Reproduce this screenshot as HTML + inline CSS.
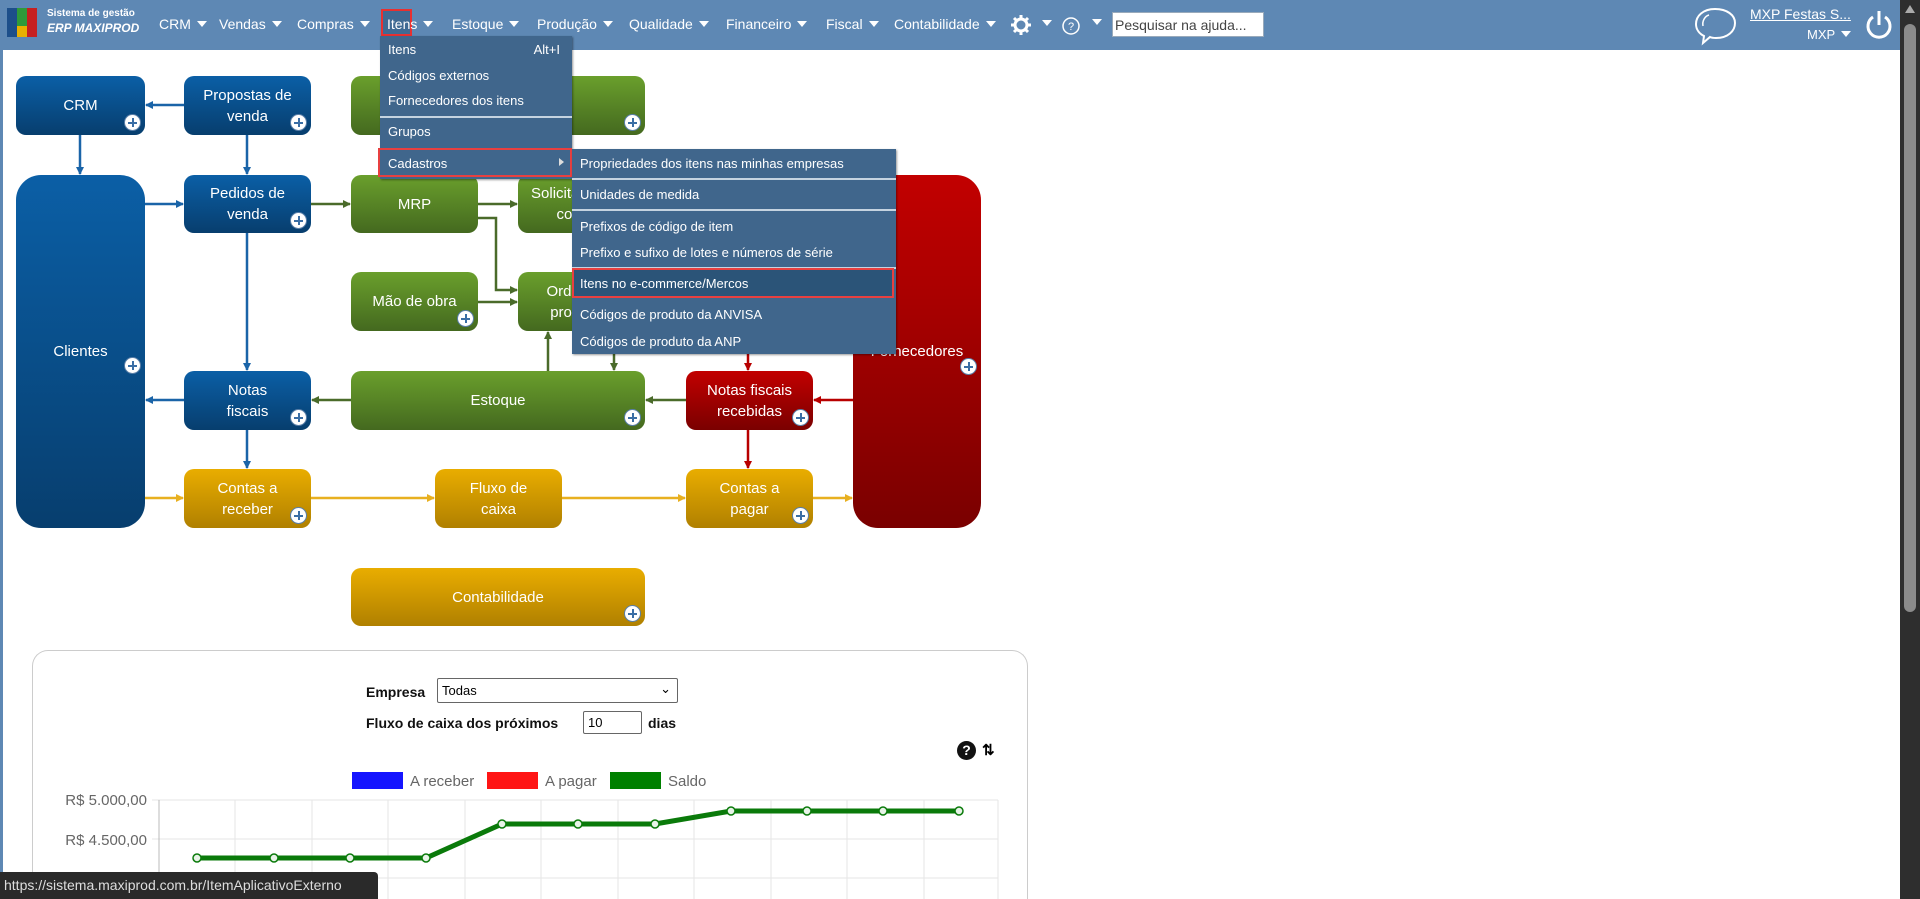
<!DOCTYPE html>
<html><head><meta charset="utf-8"><style>
*{box-sizing:border-box;margin:0;padding:0}
html{width:1920px;height:899px;overflow:hidden}
body{width:1920px;height:899px;overflow:hidden;background:#fff;font-family:"Liberation Sans",sans-serif;position:relative}
.nav{position:absolute;left:0;top:0;width:1900px;height:50px;background:#5e88b4}
.lstripe{position:absolute;left:0;top:50px;width:3px;height:849px;background:#5e88b4}
.sb{position:absolute;left:1900px;top:0;width:20px;height:899px;background:#2e2e2e}
.sb .th{position:absolute;left:4px;top:24px;width:12px;height:588px;background:#8b8b8b;border-radius:6px}
.ni{position:absolute;top:16px;color:#fff;font-size:14px}
.tri{display:inline-block;width:0;height:0;border-left:5px solid transparent;border-right:5px solid transparent;border-top:6px solid #fff;margin-left:6px;vertical-align:2px}
.menu{position:absolute;background:#40668c;color:#fff;font-size:13px;box-shadow:1px 1px 2px rgba(0,0,0,.4)}
.mi{position:absolute;left:8px}
.sep{position:absolute;left:0;right:0;height:2px;background:#c5d3e0}
.box{position:absolute;color:#fff;font-size:15px;text-align:center;display:flex;align-items:center;justify-content:center;line-height:21px;border-radius:10px}
.b{background:linear-gradient(#0b5fa6,#073e6e)}
.g{background:linear-gradient(#6a9f2c,#44691f)}
.r{background:linear-gradient(#c20000,#7a0000)}
.y{background:linear-gradient(#e9ad00,#b08000)}
.pl{position:absolute;right:4px;bottom:4px;width:17px;height:17px;border-radius:50%;background:#fff;border:1px solid #5a7fa8}
.pl:before{content:"";position:absolute;left:3px;top:6.5px;width:9px;height:2px;background:#3a6ea5}
.pl:after{content:"";position:absolute;left:6.5px;top:3px;width:2px;height:9px;background:#3a6ea5}
.lbl{position:absolute;font-size:14px;font-weight:bold;color:#111}
</style></head><body>
<div class="nav">
  <div style="position:absolute;left:7px;top:8px;width:10px;height:29px;background:#1d4f8a"></div>
  <div style="position:absolute;left:17px;top:8px;width:10px;height:18px;background:#2f9a3a"></div>
  <div style="position:absolute;left:17px;top:26px;width:10px;height:11px;background:#e8b000"></div>
  <div style="position:absolute;left:27px;top:8px;width:10px;height:29px;background:#c62020"></div>
  <div style="position:absolute;left:47px;top:8px;color:#fff;font-size:10px;font-weight:bold">Sistema de gestão</div>
  <div style="position:absolute;left:47px;top:21px;color:#fff;font-size:12px;font-weight:bold;font-style:italic">ERP MAXIPROD</div>
  <div class="ni" style="left:159px">CRM<span class="tri"></span></div>
  <div class="ni" style="left:219px">Vendas<span class="tri"></span></div>
  <div class="ni" style="left:297px">Compras<span class="tri"></span></div>
  <div style="position:absolute;left:381px;top:9px;width:31px;height:27px;border:2px solid #e83030;background:#3f6a93"></div>
  <div class="ni" style="left:387px">Itens<span class="tri"></span></div>
  <div class="ni" style="left:452px">Estoque<span class="tri"></span></div>
  <div class="ni" style="left:537px">Produção<span class="tri"></span></div>
  <div class="ni" style="left:629px">Qualidade<span class="tri"></span></div>
  <div class="ni" style="left:726px">Financeiro<span class="tri"></span></div>
  <div class="ni" style="left:826px">Fiscal<span class="tri"></span></div>
  <div class="ni" style="left:894px">Contabilidade<span class="tri"></span></div>
  <svg style="position:absolute;left:1010px;top:14px" width="22" height="22" viewBox="0 0 22 22"><circle cx="11" cy="11" r="6" fill="none" stroke="#fff" stroke-width="3"/><g stroke="#fff" stroke-width="3"><line x1="11" y1="1" x2="11" y2="5"/><line x1="11" y1="17" x2="11" y2="21"/><line x1="1" y1="11" x2="5" y2="11"/><line x1="17" y1="11" x2="21" y2="11"/><line x1="4" y1="4" x2="7" y2="7"/><line x1="15" y1="15" x2="18" y2="18"/><line x1="4" y1="18" x2="7" y2="15"/><line x1="15" y1="7" x2="18" y2="4"/></g></svg>
  <span class="tri" style="position:absolute;left:1036px;top:20px"></span>
  <svg style="position:absolute;left:1061px;top:16px" width="20" height="20"><circle cx="10" cy="10" r="8" fill="none" stroke="#fff" stroke-width="1.5"/><text x="10" y="14" font-size="11" fill="#fff" text-anchor="middle" font-family="Liberation Sans">?</text></svg>
  <span class="tri" style="position:absolute;left:1086px;top:19px"></span>
  <div style="position:absolute;left:1112px;top:12px;width:152px;height:25px;background:#fff;border:1px solid #9ab;font-size:14px;color:#444;padding:4px 2px">Pesquisar na ajuda...</div>
  <svg style="position:absolute;left:1693px;top:6px" width="46" height="40"><path d="M22 3 C10 3 3 10 3 18 C3 24 7 28 11 30 L10 37 L17 31 C19 32 21 32 23 32 C35 32 42 25 42 17 C42 9 34 3 22 3 Z" fill="none" stroke="#fff" stroke-width="2"/><path d="M10 20 C9 15 12 10 16 9" fill="none" stroke="#fff" stroke-width="1.5"/></svg>
  <div style="position:absolute;left:1750px;top:6px;color:#fff;font-size:14px;text-decoration:underline">MXP Festas S...</div>
  <div style="position:absolute;left:1807px;top:27px;color:#fff;font-size:13px">MXP<span class="tri"></span></div>
  <svg style="position:absolute;left:1864px;top:8px" width="30" height="34"><path d="M9 9 A11 11 0 1 0 21 9" fill="none" stroke="#fff" stroke-width="3"/><line x1="15" y1="3" x2="15" y2="17" stroke="#fff" stroke-width="3"/></svg>
</div>
<div class="lstripe"></div>
<div class="sb"><div class="th"></div><div style="position:absolute;left:5px;top:5px;border-left:5px solid transparent;border-right:5px solid transparent;border-bottom:8px solid #aaa"></div></div>

<svg style="position:absolute;left:0;top:0" width="1000" height="640">
<defs>
<marker id="ab" markerWidth="8" markerHeight="8" refX="7" refY="4" orient="auto" markerUnits="userSpaceOnUse"><path d="M0,0 L8,4 L0,8 z" fill="#1a64a8"/></marker>
<marker id="ag" markerWidth="8" markerHeight="8" refX="7" refY="4" orient="auto" markerUnits="userSpaceOnUse"><path d="M0,0 L8,4 L0,8 z" fill="#4a6b2a"/></marker>
<marker id="ar" markerWidth="8" markerHeight="8" refX="7" refY="4" orient="auto" markerUnits="userSpaceOnUse"><path d="M0,0 L8,4 L0,8 z" fill="#b80000"/></marker>
<marker id="ay" markerWidth="8" markerHeight="8" refX="7" refY="4" orient="auto" markerUnits="userSpaceOnUse"><path d="M0,0 L8,4 L0,8 z" fill="#e8b020"/></marker>
</defs>
<g stroke-width="2.5" fill="none">
<path d="M184 105 H146" stroke="#1a64a8" marker-end="url(#ab)"/>
<path d="M80 135 V174" stroke="#1a64a8" marker-end="url(#ab)"/>
<path d="M247 135 V174" stroke="#1a64a8" marker-end="url(#ab)"/>
<path d="M145 204 H183" stroke="#1a64a8" marker-end="url(#ab)"/>
<path d="M247 233 V370" stroke="#1a64a8" marker-end="url(#ab)"/>
<path d="M184 400 H146" stroke="#1a64a8" marker-end="url(#ab)"/>
<path d="M247 430 V468" stroke="#1a64a8" marker-end="url(#ab)"/>
<path d="M311 204 H350" stroke="#4a6b2a" marker-end="url(#ag)"/>
<path d="M478 204 H517" stroke="#4a6b2a" marker-end="url(#ag)"/>
<path d="M478 218 H496 V290 H517" stroke="#4a6b2a" marker-end="url(#ag)"/>
<path d="M478 302 H517" stroke="#4a6b2a" marker-end="url(#ag)"/>
<path d="M548 371 V332" stroke="#4a6b2a" marker-end="url(#ag)"/>
<path d="M614 331 V370" stroke="#4a6b2a" marker-end="url(#ag)"/>
<path d="M351 400 H312" stroke="#4a6b2a" marker-end="url(#ag)"/>
<path d="M686 400 H646" stroke="#4a6b2a" marker-end="url(#ag)"/>
<path d="M748 340 V370" stroke="#b80000" marker-end="url(#ar)"/>
<path d="M853 400 H814" stroke="#b80000" marker-end="url(#ar)"/>
<path d="M748 430 V468" stroke="#b80000" marker-end="url(#ar)"/>
<path d="M145 498 H183" stroke="#e8b020" marker-end="url(#ay)"/>
<path d="M311 498 H434" stroke="#e8b020" marker-end="url(#ay)"/>
<path d="M562 498 H685" stroke="#e8b020" marker-end="url(#ay)"/>
<path d="M813 498 H852" stroke="#e8b020" marker-end="url(#ay)"/>
</g></svg>

<div class="box b" style="left:16px;top:76px;width:129px;height:59px">CRM<div class="pl"></div></div>
<div class="box b" style="left:184px;top:76px;width:127px;height:59px">Propostas de<br>venda<div class="pl"></div></div>
<div class="box g" style="left:351px;top:76px;width:294px;height:59px"><div class="pl"></div></div>
<div class="box b" style="left:16px;top:175px;width:129px;height:353px;border-radius:25px">Clientes<div class="pl" style="bottom:auto;top:182px"></div></div>
<div class="box b" style="left:184px;top:175px;width:127px;height:58px">Pedidos de<br>venda<div class="pl"></div></div>
<div class="box g" style="left:351px;top:175px;width:127px;height:58px">MRP</div>
<div class="box g" style="left:518px;top:175px;width:127px;height:58px">Solicitações de<br>compra</div>
<div class="box g" style="left:351px;top:272px;width:127px;height:59px">Mão de obra<div class="pl"></div></div>
<div class="box g" style="left:518px;top:272px;width:127px;height:59px">Ordens de<br>produção</div>
<div class="box r" style="left:853px;top:175px;width:128px;height:353px;border-radius:25px">Fornecedores<div class="pl" style="bottom:auto;top:183px"></div></div>
<div class="box b" style="left:184px;top:371px;width:127px;height:59px">Notas<br>fiscais<div class="pl"></div></div>
<div class="box g" style="left:351px;top:371px;width:294px;height:59px">Estoque<div class="pl"></div></div>
<div class="box r" style="left:686px;top:371px;width:127px;height:59px">Notas fiscais<br>recebidas<div class="pl"></div></div>
<div class="box y" style="left:184px;top:469px;width:127px;height:59px">Contas a<br>receber<div class="pl"></div></div>
<div class="box y" style="left:435px;top:469px;width:127px;height:59px">Fluxo de<br>caixa</div>
<div class="box y" style="left:686px;top:469px;width:127px;height:59px">Contas a<br>pagar<div class="pl"></div></div>
<div class="box y" style="left:351px;top:568px;width:294px;height:58px">Contabilidade<div class="pl"></div></div>

<div class="menu" style="left:380px;top:36px;width:192px;height:143px">
  <div class="mi" style="top:6px">Itens</div><div style="position:absolute;right:12px;top:6px">Alt+I</div>
  <div class="mi" style="top:32px">Códigos externos</div>
  <div class="mi" style="top:57px">Fornecedores dos itens</div>
  <div class="sep" style="top:80px"></div>
  <div class="mi" style="top:88px">Grupos</div>
</div>
<div style="position:absolute;left:378px;top:148px;width:194px;height:29px;border:2px solid #e84040;background:#40668c"></div>
<div style="position:absolute;left:388px;top:156px;color:#fff;font-size:13px">Cadastros</div>
<div style="position:absolute;left:559px;top:158px;border-top:4px solid transparent;border-bottom:4px solid transparent;border-left:5px solid #ddd"></div>
<div class="menu" style="left:572px;top:149px;width:324px;height:205px">
  <div class="mi" style="top:7px">Propriedades dos itens nas minhas empresas</div>
  <div class="sep" style="top:29px"></div>
  <div class="mi" style="top:38px">Unidades de medida</div>
  <div class="sep" style="top:60px"></div>
  <div class="mi" style="top:70px">Prefixos de código de item</div>
  <div class="mi" style="top:96px">Prefixo e sufixo de lotes e números de série</div>
  <div class="sep" style="top:118px"></div>
  <div style="position:absolute;left:0;top:119px;width:322px;height:30px;border:2px solid #e84040;background:#2b5478"></div>
  <div class="mi" style="top:127px">Itens no e-commerce/Mercos</div>
  <div class="mi" style="top:158px">Códigos de produto da ANVISA</div>
  <div class="mi" style="top:185px">Códigos de produto da ANP</div>
</div>

<div style="position:absolute;left:32px;top:650px;width:996px;height:249px;border:1px solid #ccc;border-bottom:none;border-radius:16px 16px 0 0"></div>
<div class="lbl" style="left:366px;top:684px">Empresa</div>
<div style="position:absolute;left:437px;top:678px;width:241px;height:25px;border:1px solid #666;border-radius:2px;font-size:13px;padding:4px 4px">Todas<span style="position:absolute;right:6px;top:2px;font-size:13px">&#8964;</span></div>
<div class="lbl" style="left:366px;top:715px">Fluxo de caixa dos próximos</div>
<div style="position:absolute;left:583px;top:711px;width:59px;height:23px;border:1px solid #666;border-radius:2px;font-size:13px;padding:3px 4px">10</div>
<div class="lbl" style="left:648px;top:715px">dias</div>
<div style="position:absolute;left:957px;top:741px;width:19px;height:19px;border-radius:50%;background:#111;color:#fff;font-weight:bold;font-size:14px;text-align:center;line-height:19px">?</div>
<div style="position:absolute;left:982px;top:741px;font-size:15px;font-weight:bold">⇅</div>
<svg style="position:absolute;left:0;top:760px" width="1030" height="139" font-family="Liberation Sans">
  <rect x="352" y="12" width="51" height="17" fill="#1515ff"/><text x="410" y="26" font-size="15" fill="#666">A receber</text>
  <rect x="487" y="12" width="51" height="17" fill="#ff1515"/><text x="545" y="26" font-size="15" fill="#666">A pagar</text>
  <rect x="610" y="12" width="51" height="17" fill="#008000"/><text x="668" y="26" font-size="15" fill="#666">Saldo</text>
  <text x="147" y="45" font-size="15" fill="#666" text-anchor="end">R$ 5.000,00</text>
  <text x="147" y="85" font-size="15" fill="#666" text-anchor="end">R$ 4.500,00</text>
  <g stroke="#e5e5e5" stroke-width="1">
   <line x1="152" y1="40" x2="998" y2="40"/><line x1="152" y1="79" x2="998" y2="79"/><line x1="152" y1="118" x2="998" y2="118"/>
   <line x1="235" y1="40" x2="235" y2="139"/><line x1="312" y1="40" x2="312" y2="139"/><line x1="388" y1="40" x2="388" y2="139"/><line x1="465" y1="40" x2="465" y2="139"/><line x1="541" y1="40" x2="541" y2="139"/><line x1="618" y1="40" x2="618" y2="139"/><line x1="694" y1="40" x2="694" y2="139"/><line x1="771" y1="40" x2="771" y2="139"/><line x1="847" y1="40" x2="847" y2="139"/><line x1="924" y1="40" x2="924" y2="139"/><line x1="998" y1="40" x2="998" y2="139"/>
  </g>
  <line x1="159" y1="40" x2="159" y2="139" stroke="#bbb"/>
  <polyline points="197,98 274,98 350,98 426,98 502,64 578,64 655,64 731,51 807,51 883,51 959,51" fill="none" stroke="#0a7a0a" stroke-width="5"/>
  <g fill="#e8f4e8" stroke="#0a7a0a" stroke-width="1.5">
   <circle cx="197" cy="98" r="4"/><circle cx="274" cy="98" r="4"/><circle cx="350" cy="98" r="4"/><circle cx="426" cy="98" r="4"/><circle cx="502" cy="64" r="4"/><circle cx="578" cy="64" r="4"/><circle cx="655" cy="64" r="4"/><circle cx="731" cy="51" r="4"/><circle cx="807" cy="51" r="4"/><circle cx="883" cy="51" r="4"/><circle cx="959" cy="51" r="4"/>
  </g>
</svg>
<div style="position:absolute;left:0;top:872px;width:378px;height:27px;background:#2a2a2a;border-top-right-radius:4px;color:#ddd;font-size:14px;padding:5px 4px">https://sistema.maxiprod.com.br/ItemAplicativoExterno</div>
</body></html>
